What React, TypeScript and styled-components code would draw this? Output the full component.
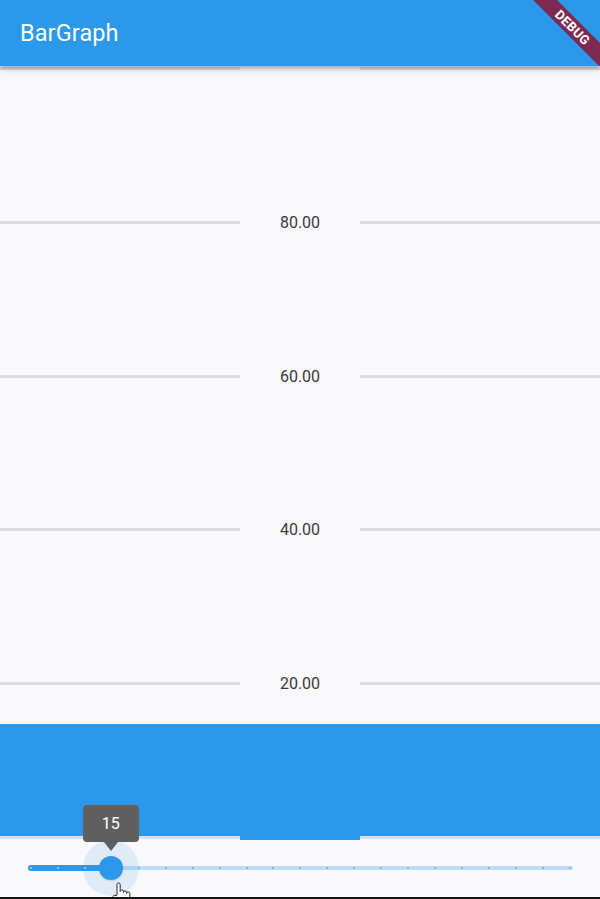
import React from 'react'
import styled, { createGlobalStyle } from 'styled-components'

const BLUE = '#2B98E9'
const MAX_VALUE = 100
const PLOT_HEIGHT = 747
const DIVISIONS = 20
const TRACK_LENGTH = 545
const TICK_INSET = 3

const GlobalStyle = createGlobalStyle`
  html, body {
    margin: 0;
    padding: 0;
    background: #f9f8fa;
  }
  body {
    font-family: Roboto, 'Noto Sans', 'Liberation Sans', sans-serif;
  }
`

const Page = styled.div`
  position: relative;
  width: 600px;
  height: 899px;
  box-sizing: border-box;
  overflow: hidden;
  display: flex;
  flex-direction: column;
  background: #f9f8fa;
  border-bottom: 2px solid #141414;
`

const AppBar = styled.header`
  position: relative;
  z-index: 3;
  flex: none;
  height: 66px;
  display: flex;
  align-items: center;
  padding: 0 20px;
  background: ${BLUE};
  box-shadow: 0 2px 4px rgba(0, 0, 0, 0.28), 0 4px 10px rgba(0, 0, 0, 0.1);
  overflow: hidden;
`

const Title = styled.h1`
  margin: 0;
  color: #fff;
  font-size: 23.5px;
  font-weight: 400;
  letter-spacing: 0.1px;
`

const DebugBanner = styled.div`
  position: absolute;
  top: 19px;
  left: 512px;
  width: 121px;
  height: 17px;
  display: flex;
  align-items: center;
  justify-content: center;
  background: #7d2a52;
  color: #fff;
  font-size: 13px;
  font-weight: 700;
  letter-spacing: 0.3px;
  transform: rotate(45deg);
`

const Chart = styled.section`
  position: relative;
  flex: none;
  height: 773px;
`

const Grid = styled.div`
  height: 100%;
  box-sizing: border-box;
  padding-top: 1px;
  display: flex;
  flex-direction: column;
  justify-content: space-between;
`

const GridRow = styled.div`
  height: 3px;
  display: flex;
`

const GridLine = styled.div`
  flex: 1;
  background: #dedddf;
`

const AxisLabel = styled.div<{ $fill?: boolean }>`
  position: relative;
  z-index: 2;
  flex: none;
  width: 120px;
  display: flex;
  align-items: center;
  justify-content: center;
  white-space: nowrap;
  font-size: 16px;
  color: #3a3a3a;
  background: ${({ $fill }) => ($fill ? BLUE : 'transparent')};
  ${({ $fill }) => ($fill ? 'margin-bottom: -1px;' : '')}
`

const Bar = styled.div`
  position: absolute;
  left: 0;
  right: 0;
  bottom: 3px;
  z-index: 1;
  background: ${BLUE};
`

const SliderArea = styled.div`
  position: relative;
  z-index: 4;
  flex: none;
  height: 58px;
  padding: 0 27px 0 28px;
  display: flex;
  align-items: center;
`

const Track = styled.div`
  position: relative;
  width: ${TRACK_LENGTH}px;
  display: flex;
  align-items: center;
`

const ActiveTrack = styled.div`
  flex: none;
  height: 6px;
  border-radius: 3px 0 0 3px;
  background: ${BLUE};
`

const InactiveTrack = styled.div`
  flex: 1;
  height: 4px;
  border-radius: 0 2px 2px 0;
  background: rgba(43, 152, 233, 0.28);
`

const Ticks = styled.div`
  position: absolute;
  left: ${TICK_INSET - 1}px;
  right: ${TICK_INSET - 1}px;
  top: 50%;
  height: 2px;
  margin-top: -1px;
  display: flex;
  justify-content: space-between;
`

const Tick = styled.span<{ $active: boolean }>`
  width: 2px;
  height: 2px;
  border-radius: 50%;
  background: ${({ $active }) => ($active ? 'rgba(255,255,255,0.6)' : 'rgba(43,152,233,0.6)')};
`

const ThumbAnchor = styled.div`
  position: absolute;
  top: 29px;
  width: 0;
  height: 0;
`

const Halo = styled.div`
  position: absolute;
  left: -28px;
  top: -28px;
  width: 56px;
  height: 56px;
  border-radius: 50%;
  background: rgba(43, 152, 233, 0.12);
`

const Thumb = styled.div`
  position: absolute;
  left: -12px;
  top: -12px;
  width: 24px;
  height: 24px;
  border-radius: 50%;
  background: ${BLUE};
  box-shadow: 0 1px 2px rgba(0, 0, 0, 0.15);
`

const ValueIndicator = styled.div`
  position: absolute;
  left: -28px;
  top: -63px;
  width: 56px;
  height: 37px;
  border-radius: 4px;
  background: #5f5f60;
  color: #fff;
  font-size: 16px;
  display: flex;
  align-items: center;
  justify-content: center;

  &::after {
    content: '';
    position: absolute;
    left: 50%;
    bottom: -9px;
    margin-left: -7px;
    border-left: 7px solid transparent;
    border-right: 7px solid transparent;
    border-top: 9px solid #5f5f60;
  }
`

const Cursor = styled.svg`
  position: absolute;
  left: 111px;
  top: 43px;
`

const HandCursor: React.FC = () => (
  <Cursor width="20" height="24" viewBox="0 0 20 24">
    <path
      d="M6 13 V2.6 a1.6 1.6 0 0 1 3.2 0 V9.5 a1.6 1.6 0 0 1 3.2 0 V10.5 a1.6 1.6 0 0 1 3.2 0 V11.5 a1.6 1.6 0 0 1 3.2 0 V17.5 q0 4.5 -4.5 5.5 H9 q-2 0 -3.2 -2 L2.4 15.8 a1.6 1.6 0 0 1 2.6 -2 Z"
      fill="#fff"
      stroke="#2a2a2a"
      strokeWidth="1"
      strokeLinejoin="round"
    />
  </Cursor>
)

const gridLabels = ['', '80.00', '60.00', '40.00', '20.00', '']

const App: React.FC = () => {
  const value = 15
  const barHeight = (value / MAX_VALUE) * PLOT_HEIGHT
  const step = (TRACK_LENGTH - TICK_INSET * 2) / DIVISIONS
  const index = Math.round((value / MAX_VALUE) * DIVISIONS)
  const thumbX = 27 + TICK_INSET + index * step

  return (
    <Page>
      <GlobalStyle />
      <AppBar>
        <Title>BarGraph</Title>
        <DebugBanner>DEBUG</DebugBanner>
      </AppBar>
      <Chart>
        <Grid>
          {gridLabels.map((label, i) => (
            <GridRow key={i}>
              <GridLine />
              <AxisLabel $fill={i === gridLabels.length - 1}>{label}</AxisLabel>
              <GridLine />
            </GridRow>
          ))}
        </Grid>
        <Bar style={{ height: barHeight }} />
      </Chart>
      <SliderArea>
        <Track>
          <ActiveTrack style={{ width: thumbX - 28 }} />
          <InactiveTrack />
          <Ticks>
            {Array.from({ length: DIVISIONS + 1 }, (_, i) => (
              <Tick key={i} $active={i < index} />
            ))}
          </Ticks>
        </Track>
        <ThumbAnchor style={{ left: thumbX }}>
          <Halo />
          <Thumb />
          <ValueIndicator>{value}</ValueIndicator>
        </ThumbAnchor>
        <HandCursor />
      </SliderArea>
    </Page>
  )
}

export default App
